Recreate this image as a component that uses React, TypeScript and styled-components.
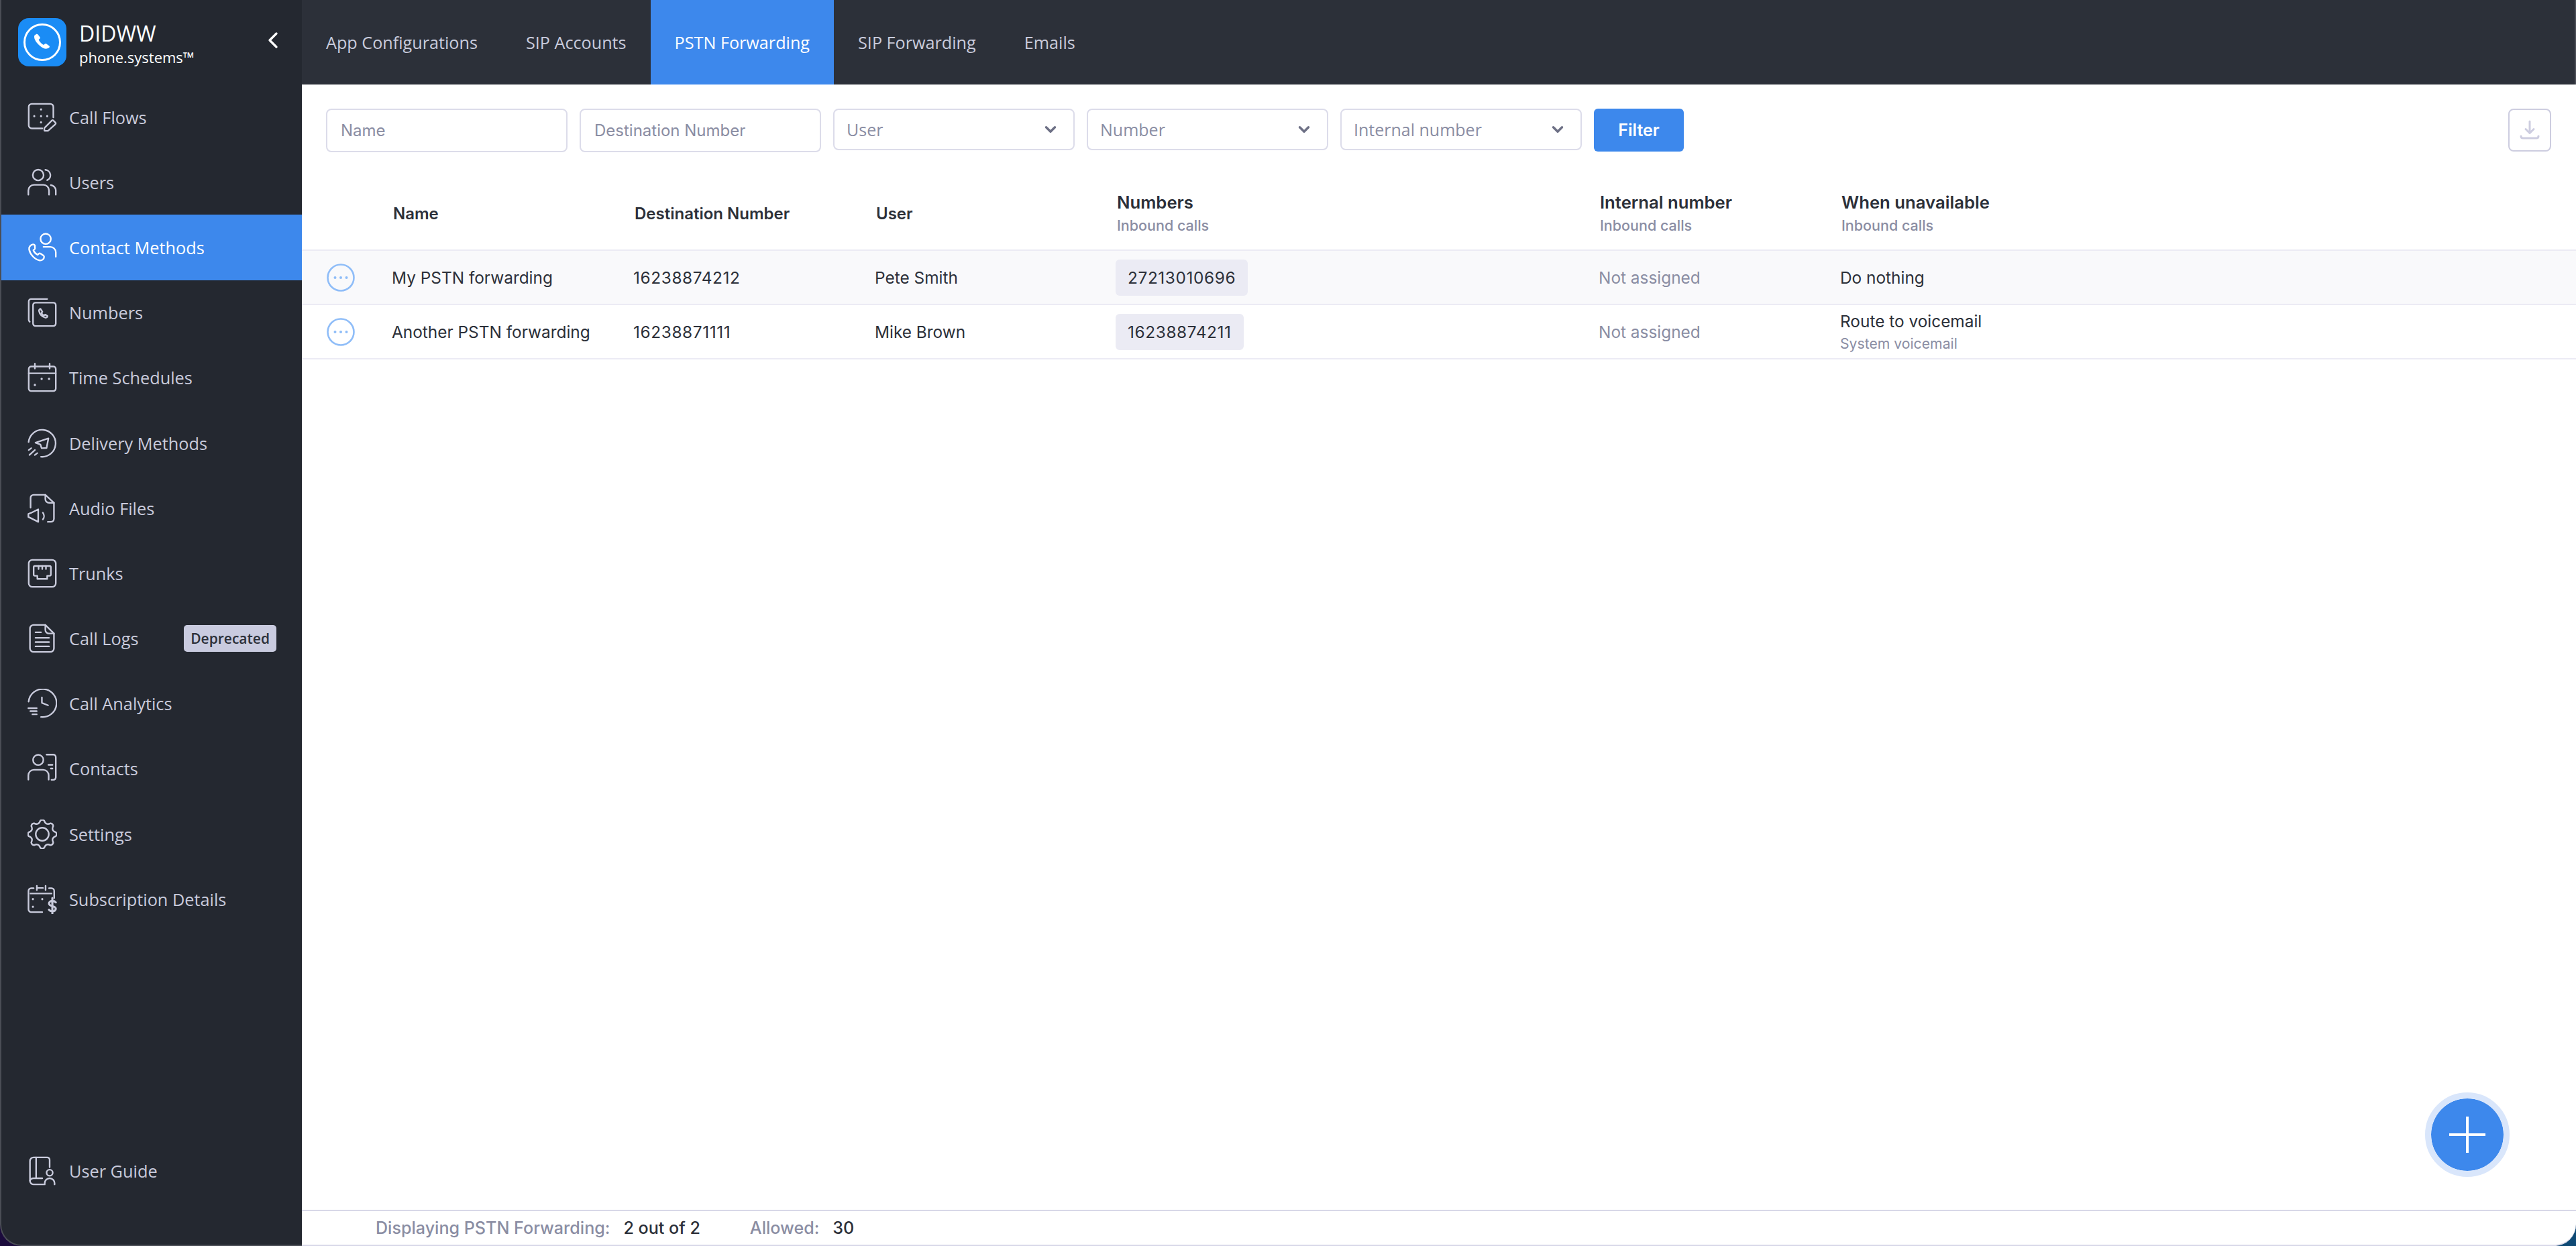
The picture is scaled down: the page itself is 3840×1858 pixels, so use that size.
import React from 'react'
import styled, { createGlobalStyle } from 'styled-components'
import { ChevronLeft, ChevronDown } from 'lucide-react'

// eight rounded teeth, tooth centred on top like the reference
const gearPath = () => {
  const pt = (deg: number, r: number) => {
    const a = ((deg - 90) * Math.PI) / 180
    return `${(12 + r * Math.cos(a)).toFixed(2)} ${(12 + r * Math.sin(a)).toFixed(2)}`
  }
  let d = `M${pt(-8, 11.2)}`
  for (let k = 0; k < 8; k++) {
    const a = k * 45
    d += ` Q${pt(a, 12.2)} ${pt(a + 8, 11.2)}`
    d += ` Q${pt(a + 22.5, 7.6)} ${pt(a + 37, 11.2)}`
  }
  return d + 'z'
}

const navIcons: Record<string, React.ReactNode> = {
  flows: (
    <>
      <path d="M12 21H3.500A2.500 2.500 0 0 1 1 18.500V3.500A2.500 2.500 0 0 1 3.500 1h15A2.500 2.500 0 0 1 21 3.500V12" />
      <path d="M11 5.500v.1M5.500 11v.1M11 11v.1M16 11v.1M11 16v.1" strokeWidth="1.7" />
      <path d="M14.500 23a.8.8 0 0 1-.8-.8v-1.500l6-6a1 1 0 0 1 1.400 0l1.500 1.500a1 1 0 0 1 0 1.400l-6 5.400z" />
    </>
  ),
  users: (
    <>
      <circle cx="8.700" cy="6" r="4.400" />
      <path d="M14.500 1.800a4.400 4.400 0 0 1 1.500 8.400" />
      <path d="M.7 22v-3.500A4.500 4.500 0 0 1 5.200 14h7.800a4.500 4.500 0 0 1 4.500 4.500V22" />
      <path d="M19 14.200a4.500 4.500 0 0 1 4 4.300V22" />
    </>
  ),
  contact: (
    <>
      <circle cx="14.800" cy="5" r="4.200" />
      <path d="M13 11.500h5.500a4.500 4.500 0 0 1 4.500 4.500v3.500" />
      <path d="M4.500 9.500C2.500 9.800 1 11.500 1.300 13.500c.7 4 4.500 8.300 8.500 9 2 .3 3.700-1 3.700-2.800 0-.5-.2-.9-.6-1.200l-2.200-1.500c-.5-.3-1.100-.3-1.500.1l-.9.9c-1.500-.7-2.900-2.200-3.500-3.700l1-.9c.4-.4.500-1 .2-1.500L6 10.300c-.3-.5-.9-.8-1.500-.8z" />
    </>
  ),
  numbers: (
    <>
      <path d="M16 1H3a2 2 0 0 0-2 2v15a2 2 0 0 0 .8 1.500" />
      <rect x="4.500" y="4" width="18.500" height="19" rx="2" />
      <path d="M10.500 9c-.8.300-1.300 1-1.100 1.900.5 2.600 2.500 4.800 5.100 5.300.9.100 1.600-.5 1.800-1.300l-2-1.200-1 .8c-.9-.5-1.600-1.200-2-2.100l.8-1z" />
    </>
  ),
  schedule: (
    <>
      <rect x="1" y="3" width="22" height="20" rx="2" />
      <path d="M1 8.500h22M6 .7v4M18 .7v4" />
      <path d="M11.500 13v.1M17.500 13v.1M6 18v.1" strokeWidth="1.800" />
    </>
  ),
  delivery: (
    <>
      <path d="M.9 11A11 11 0 1 1 11 23" />
      <path d="M17 8 6.500 11.500l4 1.500 1 3 4-.2z" />
      <path d="M1 17.500l2-1.500M1.600 21.500 6 17.500M6 21.500l2-1.500" />
    </>
  ),
  audio: (
    <>
      <path d="M2.500 11.500V3.500A2.500 2.500 0 0 1 5 1h9.500l7 6.500V20.500A2.500 2.500 0 0 1 19 23h-2.500" />
      <path d="M14.500 1v3.500A3 3 0 0 0 17.500 7.500h4" />
      <path d="M.7 16.500v2.500l2 1 6 3V12.800l-6 3z" />
      <path d="M12.500 15.500a4.500 4.500 0 0 1 0 5.500" />
    </>
  ),
  trunks: (
    <>
      <rect x="1" y="1" width="22" height="22" rx="3" />
      <path d="M5 7a1 1 0 0 1 1-1h12a1 1 0 0 1 1 1v6a1 1 0 0 1-1 1h-2v2.500h-8V14H6a1 1 0 0 1-1-1z" />
      <path d="M9 6v2.500M12 6v2.500M15 6v2.500" />
    </>
  ),
  logs: (
    <>
      <path d="M14.500 1H5a3 3 0 0 0-3 3v16a3 3 0 0 0 3 3h13.500a3 3 0 0 0 3-3V8z" />
      <path d="M14.500 1v4a3 3 0 0 0 3 3h4" />
      <path d="M6.500 7h4.500M6.500 11.500h11M6.500 15h11M6.500 18.500h11" />
    </>
  ),
  analytics: (
    <>
      <path d="M.9 10.500A11.400 11.400 0 1 1 11 23" />
      <path d="M11.700 7v4.500l5 2" />
      <path d="M.7 15.800h6.800M2.300 18.300h5.200M4 20.800h3.500" />
    </>
  ),
  contacts: (
    <>
      <circle cx="8.700" cy="5" r="4.200" />
      <path d="M.7 21v-3.500A4.500 4.500 0 0 1 5.200 13h7.500a4.500 4.500 0 0 1 4.500 4.500V21" />
      <path d="M15.500.7h5.500a2 2 0 0 1 2 2v16.500a2 2 0 0 1-2 2h-1.500" />
      <path d="M17 9h3.300M19 12h1.300" />
    </>
  ),
  settings: (
    <>
      <circle cx="12" cy="12" r="5.300" />
      <path d={gearPath()} />
    </>
  ),
  subscription: (
    <>
      <path d="M5 3H3a2.200 2.200 0 0 0-2.200 2.200v15A2.200 2.200 0 0 0 3 22.400h9M17.500 3h2A2.200 2.200 0 0 1 21.700 5.200V11" />
      <path d="M2.500 7.300h17M7.600 1v3.500M14.700 1v3.500M7.600 2.800h5" />
      <path d="M4.400 11.800v.1M12 11.800v.1M4.400 18v.1" strokeWidth="1.700" />
      <path strokeWidth="1.700" d="M23 14.500c-.6-.8-1.500-1.200-2.600-1.200-1.600 0-2.900.8-2.900 2.100 0 2.900 5.500 1.400 5.500 4.300 0 1.300-1.200 2.100-2.800 2.100-1.200 0-2.100-.5-2.700-1.300M20.200 11v12.500" />
    </>
  ),
  guide: (
    <>
      <path d="M18 9V3a2 2 0 0 0-2-2H5a3 3 0 0 0-3 3v16a3 3 0 0 0 3 3h8" />
      <path d="M7 1v17M2 20a3 3 0 0 1 3-2h7" />
      <circle cx="18" cy="13.500" r="2.500" />
      <path d="M14 23v-1a3.500 3.500 0 0 1 8 0v1" />
    </>
  ),
}

const navItems = [
  { id: 'flows', label: 'Call Flows' },
  { id: 'users', label: 'Users' },
  { id: 'contact', label: 'Contact Methods', active: true },
  { id: 'numbers', label: 'Numbers' },
  { id: 'schedule', label: 'Time Schedules' },
  { id: 'delivery', label: 'Delivery Methods' },
  { id: 'audio', label: 'Audio Files' },
  { id: 'trunks', label: 'Trunks' },
  { id: 'logs', label: 'Call Logs', badge: 'Deprecated' },
  { id: 'analytics', label: 'Call Analytics' },
  { id: 'contacts', label: 'Contacts' },
  { id: 'settings', label: 'Settings' },
  { id: 'subscription', label: 'Subscription Details' },
]

const tabs = ['App Configurations', 'SIP Accounts', 'PSTN Forwarding', 'SIP Forwarding', 'Emails']

const rows = [
  { name: 'My PSTN forwarding', dest: '16238874212', user: 'Pete Smith', number: '27213010696', main: 'Do nothing', highlight: true },
  { name: 'Another PSTN forwarding', dest: '16238871111', user: 'Mike Brown', number: '16238874211', main: 'Route to voicemail', sub: 'System voicemail' },
]

function NavIcon({ id }: { id: string }) {
  return <IconSvg viewBox="0 0 24 24">{navIcons[id]}</IconSvg>
}

export default function App() {
  return (
    <>
      <GlobalStyle />
      <Screen>
        <Sidebar>
          <Brand>
            <LogoBox>
              <svg viewBox="0 0 72 72" width="72" height="72">
                <circle cx="36" cy="36" r="26.500" fill="none" stroke="#fff" strokeWidth="3" />
                <path
                  fill="#fff"
                  d="M26.500 24.500c-1.500.3-2.500 1.500-2.500 3.300 0 2.800 1.400 5.800 3.700 8.700 2.800 3.500 6.300 6.600 9.800 8.300 3 1.300 6 1.300 8-.2 1.400-1 1.900-2.300 1-3.200l-4.500-3.100c-.7-.5-1.600-.4-2.200.2l-1.600 1.500c-3-1.300-6.300-4.800-7.600-7.800l1.600-1.500c.7-.6.800-1.500.4-2.300l-3-4c-.6-.6-1.900-.9-3.100-.4z"
                />
              </svg>
            </LogoBox>
            <BrandText>
              <BrandName>DIDWW</BrandName>
              <BrandSub>phone.systems™</BrandSub>
            </BrandText>
            <Collapse>
              <ChevronLeft size={40} strokeWidth={2} />
            </Collapse>
          </Brand>
          <NavList>
            {navItems.map((item) => (
              <NavRow key={item.id} $active={item.active}>
                <NavIcon id={item.id} />
                <NavLabel>{item.label}</NavLabel>
                {item.badge ? <Badge>{item.badge}</Badge> : null}
              </NavRow>
            ))}
          </NavList>
          <NavRow>
            <NavIcon id="guide" />
            <NavLabel>User Guide</NavLabel>
          </NavRow>
        </Sidebar>
        <Main>
          <TopBar>
            {tabs.map((tab) => (
              <Tab key={tab} $active={tab === 'PSTN Forwarding'}>
                {tab}
              </Tab>
            ))}
          </TopBar>
          <Content>
            <FilterBar>
              <TextField placeholder="Name" readOnly />
              <TextField placeholder="Destination Number" readOnly />
              <SelectField>
                User
                <ChevronDown size={26} strokeWidth={3.2} color="#6d7085" />
              </SelectField>
              <SelectField>
                Number
                <ChevronDown size={26} strokeWidth={3.2} color="#6d7085" />
              </SelectField>
              <SelectField>
                Internal number
                <ChevronDown size={26} strokeWidth={3.2} color="#6d7085" />
              </SelectField>
              <FilterButton>Filter</FilterButton>
              <DownloadButton>
                <svg viewBox="0 0 30 30" width="30" height="30" fill="none" stroke="#cdcde0" strokeWidth="3" strokeLinecap="round" strokeLinejoin="round">
                  <path d="M15 2v17M9 13.500l6 6 6-6" />
                  <path d="M2 24c0 2 1 3 3 3h20c2 0 3-1 3-3" />
                </svg>
              </DownloadButton>
            </FilterBar>
            <HeaderRow>
              <span />
              <HeadCell><HeadTitle>Name</HeadTitle></HeadCell>
              <HeadCell><HeadTitle>Destination Number</HeadTitle></HeadCell>
              <HeadCell><HeadTitle>User</HeadTitle></HeadCell>
              <HeadCell><HeadTitle $large>Numbers</HeadTitle><HeadSub>Inbound calls</HeadSub></HeadCell>
              <HeadCell><HeadTitle $large>Internal number</HeadTitle><HeadSub>Inbound calls</HeadSub></HeadCell>
              <HeadCell><HeadTitle $large>When unavailable</HeadTitle><HeadSub>Inbound calls</HeadSub></HeadCell>
            </HeaderRow>
            {rows.map((row) => (
              <DataRow key={row.name} $highlight={row.highlight}>
                <ActionCell>
                  <svg viewBox="0 0 42 42" width="42" height="42" fill="none">
                    <circle cx="21" cy="21" r="19.500" stroke="#8fbdf8" strokeWidth="2.600" />
                    <circle cx="12.500" cy="21" r="2" fill="#8fbdf8" />
                    <circle cx="21" cy="21" r="2" fill="#8fbdf8" />
                    <circle cx="29.500" cy="21" r="2" fill="#8fbdf8" />
                  </svg>
                </ActionCell>
                <Cell>{row.name}</Cell>
                <NumberCell>{row.dest}</NumberCell>
                <Cell>{row.user}</Cell>
                <Cell><NumberChip>{row.number}</NumberChip></Cell>
                <MutedCell>Not assigned</MutedCell>
                <Cell>
                  <div>{row.main}</div>
                  {row.sub ? <CellSub>{row.sub}</CellSub> : null}
                </Cell>
              </DataRow>
            ))}
            <Fab>
              <svg viewBox="0 0 54 54" width="54" height="54">
                <path d="M27 0v54M0 27h54" stroke="#fff" strokeWidth="4" />
              </svg>
            </Fab>
          </Content>
          <Footer>
            <FooterLabel>Displaying PSTN Forwarding:</FooterLabel>
            <FooterValue>2 out of 2</FooterValue>
            <FooterLabel>Allowed:</FooterLabel>
            <FooterValue>30</FooterValue>
          </Footer>
        </Main>
      </Screen>
    </>
  )
}

/*---> Styles <---*/
const GlobalStyle = createGlobalStyle`
  html, body {
    margin: 0;
    padding: 0;
    background: linear-gradient(90deg, #1b0b3c, #0f4a75);
  }
  * {
    box-sizing: border-box;
  }
`

const Screen = styled.div`
  display: flex;
  width: 3840px;
  height: 1858px;
  overflow: hidden;
  font-family: Inter, 'Liberation Sans', sans-serif;
  color: #2c3039;
`

const Sidebar = styled.aside`
  display: flex;
  flex-direction: column;
  width: 450px;
  flex: none;
  padding-bottom: 61px;
  background: #242830;
  border-left: 2px solid #4a4d55;
  border-bottom: 2px solid #4a4d55;
  border-bottom-left-radius: 32px;
  font-family: 'Open Sans', sans-serif;
`

const Brand = styled.div`
  display: flex;
  align-items: center;
  height: 126px;
  padding-left: 25px;
`

const LogoBox = styled.div`
  display: flex;
  width: 72px;
  height: 72px;
  flex: none;
  border-radius: 16px;
  background: #1a8cf5;
`

const BrandText = styled.div`
  display: flex;
  flex-direction: column;
  margin-left: 19px;
  padding-top: 3px;
`

const BrandName = styled.div`
  font-size: 32px;
  line-height: 40px;
  color: #fff;
`

const BrandSub = styled.div`
  font-size: 22px;
  line-height: 30px;
  color: #fff;
`

const Collapse = styled.div`
  display: flex;
  margin-left: auto;
  margin-right: 23px;
  margin-top: -6px;
  color: #fff;
`

const NavList = styled.nav`
  display: flex;
  flex: 1;
  flex-direction: column;
`

const NavRow = styled.div<{ $active?: boolean }>`
  display: flex;
  align-items: center;
  gap: 18px;
  height: 97.2px;
  flex: none;
  padding-left: 39px;
  background: ${(p) => (p.$active ? '#3d88ec' : 'transparent')};
  color: ${(p) => (p.$active ? '#fff' : '#c9cbdc')};
`

const IconSvg = styled.svg`
  width: 44px;
  height: 44px;
  flex: none;
  fill: none;
  stroke: currentColor;
  stroke-width: 1.3;
  stroke-linecap: round;
  stroke-linejoin: round;
`

const NavLabel = styled.span`
  font-size: 25.3px;
  white-space: nowrap;
`

const Badge = styled.span`
  margin-left: auto;
  margin-right: 38px;
  padding: 0 10px;
  height: 40px;
  line-height: 40px;
  border-radius: 5px;
  background: #c9cbdf;
  color: #2c3039;
  font-size: 21px;
  font-weight: 600;
`

const Main = styled.main`
  display: flex;
  flex-direction: column;
  flex: 1;
  min-width: 0;
  background: #fff;
  border-bottom: 2px solid #d8d8e8;
  border-bottom-right-radius: 32px;
  overflow: hidden;
`

const TopBar = styled.header`
  display: flex;
  height: 126px;
  flex: none;
  background: #2c3039;
  border-right: 2px solid #4a4d55;
  font-family: 'Open Sans', sans-serif;
`

const Tab = styled.div<{ $active?: boolean }>`
  display: flex;
  align-items: center;
  padding: 0 36px;
  background: ${(p) => (p.$active ? '#3d88ec' : 'transparent')};
  color: ${(p) => (p.$active ? '#fff' : '#c9cbdc')};
  font-size: 25.2px;
  white-space: nowrap;
`

const Content = styled.section`
  position: relative;
  flex: 1;
`

const FilterBar = styled.div`
  display: flex;
  align-items: flex-start;
  gap: 18px;
  padding: 36px 37px 0 36px;
  height: 136px;
`

const TextField = styled.input`
  width: 360px;
  height: 65px;
  padding: 0 20px;
  border: 2px solid #dcdcea;
  border-radius: 8px;
  background: #fff;
  font-family: Inter, sans-serif;
  font-size: 24px;
  outline: none;
  &::placeholder {
    color: #8a8da3;
    opacity: 1;
  }
`

const SelectField = styled.div`
  display: flex;
  align-items: center;
  justify-content: space-between;
  width: 360px;
  height: 62px;
  padding: 0 21px 0 18px;
  border: 2px solid #dcdcea;
  border-radius: 8px;
  color: #8a8da3;
  font-family: 'Open Sans', sans-serif;
  font-size: 25px;
`

const FilterButton = styled.button`
  width: 134px;
  height: 64px;
  border: 0;
  border-radius: 6px;
  background: #3d88ec;
  color: #fff;
  font-family: Inter, sans-serif;
  font-size: 25px;
  font-weight: 600;
`

const DownloadButton = styled.div`
  display: flex;
  align-items: center;
  justify-content: center;
  width: 64px;
  height: 64px;
  margin-left: auto;
  border: 2px solid #cdcde0;
  border-radius: 8px;
`

const columns = '134px 360px 360px 359px 720px 360px 1fr'

const HeaderRow = styled.div`
  display: grid;
  grid-template-columns: ${columns};
  align-items: center;
  height: 112px;
  padding-top: 3px;
  border-bottom: 2px solid #ecebf4;
`

const HeadCell = styled.div`
  padding-left: 2px;
`

const HeadTitle = styled.div<{ $large?: boolean }>`
  font-size: ${(p) => (p.$large ? '25.7px' : '24px')};
  line-height: 34px;
  font-weight: 600;
  color: #2c3039;
`

const HeadSub = styled.div`
  font-size: 21.5px;
  line-height: 34px;
  font-weight: 500;
  color: #8a8da3;
`

const DataRow = styled.div<{ $highlight?: boolean }>`
  display: grid;
  grid-template-columns: ${columns};
  align-items: center;
  height: 81px;
  border-bottom: 2px solid #ecebf4;
  background: ${(p) => (p.$highlight ? '#f9f9fb' : '#fff')};
`

const ActionCell = styled.div`
  display: flex;
  padding-left: 37px;
`

const Cell = styled.div`
  padding-top: 1px;
  font-size: 24.4px;
  line-height: 34px;
  color: #2c3039;
`

const NumberCell = styled(Cell)`
  letter-spacing: 0.6px;
`

const MutedCell = styled(Cell)`
  color: #8a8da3;
`

const CellSub = styled.div`
  font-size: 21.2px;
  line-height: 32px;
  color: #8a8da3;
`

const NumberChip = styled.span`
  display: inline-flex;
  align-items: center;
  height: 54px;
  padding: 0 18px;
  border-radius: 6px;
  background: #ebebf4;
  letter-spacing: 0.6px;
`

const Fab = styled.div`
  position: absolute;
  right: 99px;
  bottom: 49px;
  display: flex;
  align-items: center;
  justify-content: center;
  width: 126px;
  height: 126px;
  border: 9px solid #d9e6fb;
  border-radius: 50%;
  background: #3d88ec;
  background-clip: padding-box;
`

const Footer = styled.footer`
  display: flex;
  align-items: center;
  height: 52px;
  flex: none;
  padding-left: 110px;
  border-top: 2px solid #d8d8e8;
  font-size: 25.1px;
  font-weight: 500;
`

const FooterLabel = styled.span`
  color: #8a8da3;
  margin-right: 20px;
`

const FooterValue = styled.span`
  color: #2c3039;
  margin-right: 74px;
`
